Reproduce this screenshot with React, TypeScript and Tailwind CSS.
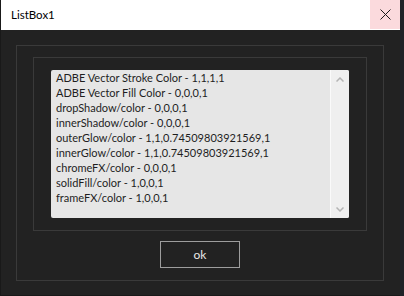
const items = [
  "ADBE Vector Stroke Color - 1,1,1,1",
  "ADBE Vector Fill Color - 0,0,0,1",
  "dropShadow/color - 0,0,0,1",
  "innerShadow/color - 0,0,0,1",
  "outerGlow/color - 1,1,0.74509803921569,1",
  "innerGlow/color - 1,1,0.74509803921569,1",
  "chromeFX/color - 0,0,0,1",
  "solidFill/color - 1,0,0,1",
  "frameFX/color - 1,0,0,1",
];

export default function App() {
  return (
    <div className="flex w-[404px] h-[296px] bg-[#1f2227] font-['Lato',sans-serif] text-[11px]">
      <div className="flex flex-col w-[400px] h-[296px] border-l border-b border-[#191919] bg-[#222222]">
        {/* Title bar */}
        <div className="flex items-start h-[30px] bg-white shrink-0">
          <span className="flex-1 pl-[10px] pt-[6px] text-black text-[11.5px] leading-[17px]">ListBox1</span>
          <button className="flex items-center justify-center w-[30px] h-[29px] bg-[#fbdadd]">
            <svg width="11" height="11" viewBox="0 0 11 11" fill="none" stroke="#1a1a1a" strokeWidth="1">
              <path d="M0.5 0.5 L10.5 10.5 M10.5 0.5 L0.5 10.5" />
            </svg>
          </button>
        </div>

        {/* Body */}
        <div className="flex flex-1 px-[15px] pt-[15px]">
          <div className="flex flex-col items-center w-[368px] h-[236px] border border-[#3a3a3a] px-[16px] pt-[11px]">
            <div className="w-[334px] h-[174px] border border-[#3a3a3a] pl-[17px] pt-[12px]">
              <div className="flex w-[298px] h-[148px] bg-[#e6e6e6] rounded-[2px] overflow-hidden">
                <div className="flex-1 pl-[5px] text-[#1e1e1e] leading-[15px]">
                  {items.map((t) => (
                    <div key={t} className="h-[15px] whitespace-nowrap">{t}</div>
                  ))}
                </div>
                <div className="flex flex-col justify-between items-center w-[19px] border-l border-[#fafafa] bg-[#efefef] pt-[7px] pb-[6px]">
                  <svg width="8" height="5" viewBox="0 0 8 5" fill="none" stroke="#b4b4b4" strokeWidth="1.5">
                    <path d="M0.5 4.5 L4 1 L7.5 4.5" />
                  </svg>
                  <svg width="8" height="5" viewBox="0 0 8 5" fill="none" stroke="#b4b4b4" strokeWidth="1.5">
                    <path d="M0.5 0.5 L4 4 L7.5 0.5" />
                  </svg>
                </div>
              </div>
            </div>
            <button className="mt-[10px] w-[80px] h-[27px] border border-[#9d9d9d] text-[#e8e8e8] text-[12px] leading-[15px]">
              ok
            </button>
          </div>
        </div>
      </div>
    </div>
  );
}
